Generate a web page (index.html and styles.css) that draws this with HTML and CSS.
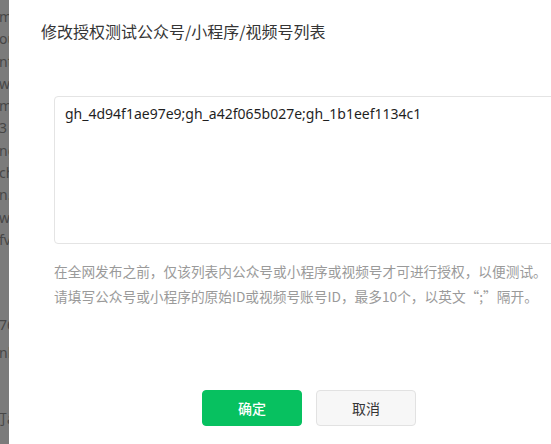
FILE: index.html
```html
<!DOCTYPE html>
<html lang="zh-CN">
<head>
<meta charset="utf-8">
<title>修改授权测试公众号</title>
<link rel="stylesheet" href="styles.css">
</head>
<body>
<div class="screen">
  <div class="backdrop">
    <div class="bg-block">
      <div class="bg-line">m</div>
      <div class="bg-line">ou</div>
      <div class="bg-line">nt</div>
      <div class="bg-line">w.</div>
      <div class="bg-line">m</div>
      <div class="bg-line">3</div>
      <div class="bg-line">ng</div>
      <div class="bg-line">ch</div>
      <div class="bg-line">n.</div>
      <div class="bg-line">we</div>
      <div class="bg-line">fv</div>
    </div>
    <div class="bg-block bg-block-2">
      <div class="bg-line">76</div>
      <div class="bg-line bg-line-gap">nh</div>
      <div class="bg-line bg-line-far">订a</div>
    </div>
  </div>
  <div class="dialog">
    <div class="dialog-title">修改授权测试公众号/小程序/视频号列表</div>
    <div class="dialog-body">
      <textarea class="id-input" readonly>gh_4d94f1ae97e9;gh_a42f065b027e;gh_1b1eef1134c1</textarea>
      <p class="hint">在全网发布之前，仅该列表内公众号或小程序或视频号才可进行授权，以便测试。<br>请填写公众号或小程序的原始ID或视频号账号ID，最多10个，以英文“;”隔开。</p>
    </div>
    <div class="dialog-footer">
      <button class="btn btn-primary" type="button">确定</button>
      <button class="btn btn-default" type="button">取消</button>
    </div>
  </div>
</div>
</body>
</html>
```
FILE: styles.css
```css
html, body {
  margin: 0;
  padding: 0;
  width: 551px;
  height: 444px;
  overflow: hidden;
  background: #ffffff;
  font-family: "Noto Sans CJK SC", "Noto Sans", sans-serif;
}

.screen {
  display: flex;
  width: 551px;
  height: 444px;
  overflow: hidden;
}

.backdrop {
  flex: 0 0 9px;
  width: 9px;
  height: 444px;
  background: #7b7b7b;
  overflow: hidden;
  color: #474747;
  font-family: "Noto Sans", sans-serif;
  font-size: 14px;
}

.bg-block {
  padding-top: 6px;
}

.bg-line {
  height: 22.3px;
  line-height: 22.3px;
  white-space: nowrap;
  margin-left: -1px;
}

.bg-block-2 {
  padding-top: 63px;
}

.bg-line-gap {
  margin-top: 5px;
}

.bg-line-far {
  margin-top: 44px;
  margin-left: -7px;
}

.dialog {
  flex: 0 0 600px;
  width: 600px;
  background: #ffffff;
  display: flex;
  flex-direction: column;
  padding-top: 20px;
  box-sizing: border-box;
}

.dialog-title {
  padding-left: 32px;
  font-size: 16px;
  line-height: 22px;
  color: #353535;
}

.dialog-body {
  padding: 0 45px;
  margin-top: 54px;
}

.id-input {
  display: block;
  width: 100%;
  height: 148px;
  box-sizing: border-box;
  margin: 0;
  padding: 7px 10px;
  border: 1px solid #e4e4e4;
  border-radius: 4px;
  resize: none;
  outline: none;
  font-family: "Noto Sans", "Noto Sans CJK SC", sans-serif;
  font-size: 14px;
  line-height: 20px;
  color: #1f1f1f;
  background: #ffffff;
}

.hint {
  margin: 15px 0 0;
  font-size: 13.7px;
  line-height: 25px;
  color: #9a9a9a;
  white-space: nowrap;
}

.dialog-footer {
  margin-top: 81px;
  display: flex;
  justify-content: center;
  gap: 14px;
}

.btn {
  width: 100px;
  height: 36px;
  box-sizing: border-box;
  border-radius: 4px;
  font-family: "Noto Sans CJK SC", sans-serif;
  font-size: 14px;
  padding: 0;
  margin: 0;
  cursor: pointer;
}

.btn-primary {
  background: #07c160;
  color: #ffffff;
  border: 1px solid #07c160;
  font-weight: 500;
}

.btn-default {
  background: #f7f7f7;
  color: #353535;
  border: 1px solid #e2e2e2;
}
```
